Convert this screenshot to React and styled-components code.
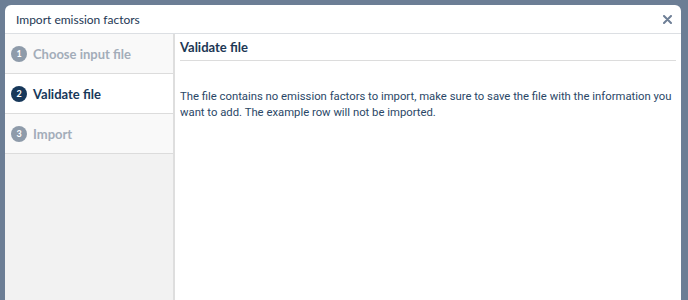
import React from "react";
import styled, { createGlobalStyle } from "styled-components";

const GlobalStyle = createGlobalStyle`
  html, body {
    margin: 0;
    padding: 0;
    height: 100%;
    overflow: hidden;
  }
  body {
    background: #6c7e95;
    font-family: "Lato", "Inter", sans-serif;
  }
`;

const steps = [
  { n: 1, label: "Choose input file", state: "done" },
  { n: 2, label: "Validate file", state: "active" },
  { n: 3, label: "Import", state: "todo" },
];

export default function App() {
  return (
    <>
      <GlobalStyle />
      <Backdrop>
        <Modal>
          <Header>
            <Title>Import emission factors</Title>
            <Close aria-label="close">
              <svg width="9" height="9" viewBox="0 0 9 9">
                <path
                  d="M1 1L8 8M8 1L1 8"
                  stroke="#6e7f96"
                  strokeWidth="2"
                  strokeLinecap="round"
                />
              </svg>
            </Close>
          </Header>
          <Body>
            <Sidebar>
              {steps.map((s) => (
                <Step key={s.n} active={s.state === "active"}>
                  <Num active={s.state === "active"}>{s.n}</Num>
                  <StepLabel active={s.state === "active"}>{s.label}</StepLabel>
                </Step>
              ))}
            </Sidebar>
            <Content>
              <SectionTitle>Validate file</SectionTitle>
              <Message>
                The file contains no emission factors to import, make sure to
                save the file with the information you want to add. The example
                row will not be imported.
              </Message>
            </Content>
          </Body>
        </Modal>
      </Backdrop>
    </>
  );
}

const Backdrop = styled.div`
  height: 100vh;
  padding: 5px 7px 0 5px;
  box-sizing: border-box;
  display: flex;
`;

const Modal = styled.div`
  flex: 1;
  background: #fff;
  border-radius: 6px 6px 0 0;
  display: flex;
  flex-direction: column;
  overflow: hidden;
`;

const Header = styled.div`
  height: 28px;
  display: flex;
  align-items: center;
  justify-content: space-between;
  padding: 0 8px 0 11px;
  border-bottom: 1px solid #dcdfe3;
`;

const Title = styled.div`
  font-size: 12px;
  color: #1d3754;
`;

const Close = styled.div`
  width: 12px;
  height: 12px;
  display: flex;
  align-items: center;
  justify-content: center;
`;

const Body = styled.div`
  flex: 1;
  display: flex;
`;

const Sidebar = styled.div`
  width: 168px;
  background: #f2f2f2;
  border-right: 2px solid #dedede;
`;

const Step = styled.div`
  height: 39px;
  display: flex;
  align-items: center;
  gap: 6px;
  padding-left: 6px;
  background: ${(p) => (p.active ? "#fff" : "#f9f9f9")};
  border-bottom: 1px solid #dcdcdc;
`;

const Num = styled.div`
  width: 16px;
  height: 16px;
  border-radius: 50%;
  background: ${(p) => (p.active ? "#17385a" : "#8e9baa")};
  color: #fff;
  font-size: 9px;
  font-weight: 700;
  display: flex;
  align-items: center;
  justify-content: center;
`;

const StepLabel = styled.div`
  font-size: 13px;
  font-weight: 700;
  color: ${(p) => (p.active ? "#17385a" : "#a3adb9")};
`;

const Content = styled.div`
  flex: 1;
  padding: 5px 5px 0 5px;
`;

const SectionTitle = styled.div`
  font-size: 13px;
  font-weight: 700;
  color: #1d3754;
  padding-bottom: 5px;
  border-bottom: 1px solid #dcdcdc;
`;

const Message = styled.p`
  margin: 28px 0 0;
  font-family: "Roboto", "Liberation Sans", sans-serif;
  font-size: 11.3px;
  line-height: 16px;
  color: #2a4767;
`;
